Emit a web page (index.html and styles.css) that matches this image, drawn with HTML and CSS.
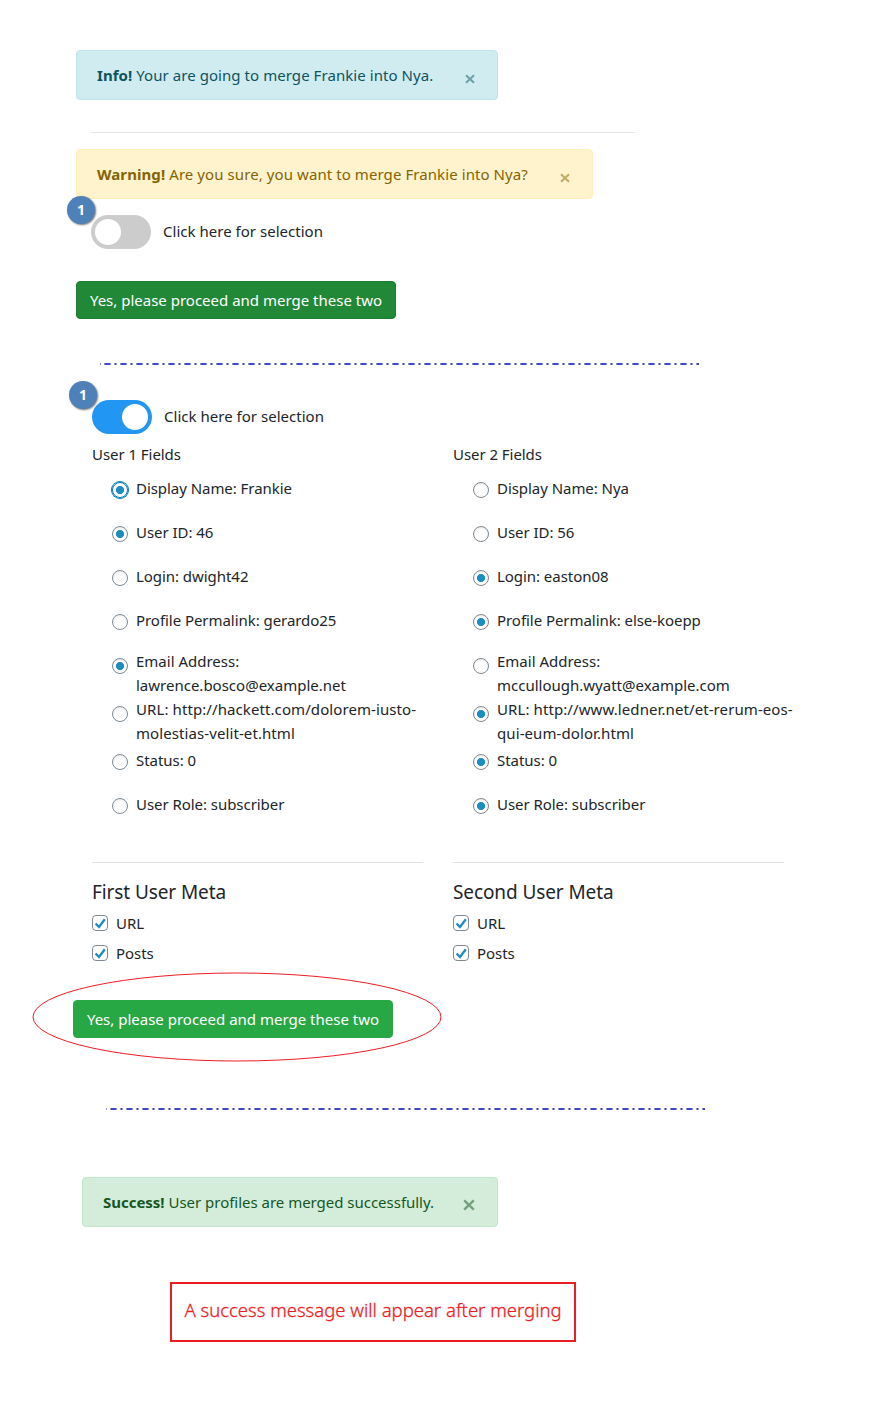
FILE: index.html
```
<!DOCTYPE html>
<html lang="en">
<head>
<meta charset="utf-8">
<title>Merge users</title>
<link rel="stylesheet" href="styles.css">
</head>
<body>
<main class="page">
  <div class="alert alert-info"><span class="msg"><strong>Info!</strong> Your are going to merge Frankie into Nya.</span><svg class="close" viewBox="0 0 10 10"><path d="M1 1.2L9 8.8M9 1.2L1 8.8"/></svg></div>
  <hr class="rule rule-top">
  <div class="alert alert-warning"><span class="msg"><strong>Warning!</strong> Are you sure, you want to merge Frankie into Nya?</span><svg class="close" viewBox="0 0 10 10"><path d="M1 1.2L9 8.8M9 1.2L1 8.8"/></svg></div>
  <div class="switch-row first"><span class="badge">1</span><span class="switch"></span><span class="switch-label">Click here for selection</span></div>
  <button class="btn btn-dark">Yes, please proceed and merge these two</button>
  <svg class="divider divider-one" viewBox="0 0 599 2"><path class="ends" d="M0 1H599"/><path class="mids" d="M0 1H599"/></svg>
  <div class="switch-row second"><span class="badge">1</span><span class="switch on"></span><span class="switch-label">Click here for selection</span></div>
  <div class="columns">
    <section class="column">
      <h2 class="fields-title">User 1 Fields</h2>
      <ul class="fields">
        <li><i class="radio checked focused"></i><span>Display Name: Frankie</span></li>
        <li><i class="radio checked"></i><span>User ID: 46</span></li>
        <li><i class="radio"></i><span>Login: dwight42</span></li>
        <li><i class="radio"></i><span>Profile Permalink: gerardo25</span></li>
        <li class="double"><i class="radio checked"></i><span>Email Address:<br>lawrence.bosco@example.net</span></li>
        <li class="double url"><i class="radio"></i><span>URL: http://hackett.com/dolorem-iusto-<br>molestias-velit-et.html</span></li>
        <li><i class="radio"></i><span>Status: 0</span></li>
        <li><i class="radio"></i><span>User Role: subscriber</span></li>
      </ul>
      <hr class="rule">
      <h3 class="meta-title">First User Meta</h3>
      <div class="check-row"><svg class="check" viewBox="0 0 16 16"><rect x=".5" y=".5" width="15" height="15" rx="3.5"/><path d="M3.6 8.5L7 12 12.8 4.2"/></svg><span>URL</span></div>
      <div class="check-row"><svg class="check" viewBox="0 0 16 16"><rect x=".5" y=".5" width="15" height="15" rx="3.5"/><path d="M3.6 8.5L7 12 12.8 4.2"/></svg><span>Posts</span></div>
    </section>
    <section class="column">
      <h2 class="fields-title">User 2 Fields</h2>
      <ul class="fields">
        <li><i class="radio"></i><span>Display Name: Nya</span></li>
        <li><i class="radio"></i><span>User ID: 56</span></li>
        <li><i class="radio checked"></i><span>Login: easton08</span></li>
        <li><i class="radio checked"></i><span>Profile Permalink: else-koepp</span></li>
        <li class="double"><i class="radio"></i><span>Email Address:<br>mccullough.wyatt@example.com</span></li>
        <li class="double url"><i class="radio checked"></i><span>URL: http://www.ledner.net/et-rerum-eos-<br>qui-eum-dolor.html</span></li>
        <li><i class="radio checked"></i><span>Status: 0</span></li>
        <li><i class="radio checked"></i><span>User Role: subscriber</span></li>
      </ul>
      <hr class="rule">
      <h3 class="meta-title">Second User Meta</h3>
      <div class="check-row"><svg class="check" viewBox="0 0 16 16"><rect x=".5" y=".5" width="15" height="15" rx="3.5"/><path d="M3.6 8.5L7 12 12.8 4.2"/></svg><span>URL</span></div>
      <div class="check-row"><svg class="check" viewBox="0 0 16 16"><rect x=".5" y=".5" width="15" height="15" rx="3.5"/><path d="M3.6 8.5L7 12 12.8 4.2"/></svg><span>Posts</span></div>
    </section>
  </div>
  <div class="circled">
    <button class="btn">Yes, please proceed and merge these two</button>
    <svg class="ellipse" viewBox="0 0 410 90"><ellipse cx="205" cy="45" rx="204" ry="44"/></svg>
  </div>
  <svg class="divider divider-two" viewBox="0 0 599 2"><path class="ends" d="M0 1H599"/><path class="mids" d="M0 1H599"/></svg>
  <div class="alert alert-success"><span class="msg"><strong>Success!</strong> User profiles are merged successfully.</span><svg class="close" viewBox="0 0 10 10"><path d="M1 1.2L9 8.8M9 1.2L1 8.8"/></svg></div>
  <p class="note">A success message will appear after merging</p>
</main>
</body>
</html>
```
FILE: styles.css
```
* { box-sizing: border-box; }
body { margin: 0; background: #fff; color: #212529; font: 15px/24px "Noto Sans", sans-serif; letter-spacing: -0.05px; }
.page { display: flex; flex-direction: column; align-items: flex-start; height: 1412px; padding-top: 50px; overflow: hidden; }
.page > * { flex-shrink: 0; }
h2, h3, p, ul { margin: 0; padding: 0; }
.alert { display: flex; align-items: center; justify-content: space-between; height: 50px; margin-left: 76px; padding: 0 22px 0 20px; border: 1px solid; border-radius: 4px; white-space: nowrap; }
.close { width: 10px; height: 10px; margin-top: 8px; fill: none; stroke: currentColor; stroke-width: 2; opacity: .5; }
.alert-info { width: 422px; color: #0c5460; background: #d1ecf1; border-color: #bee5eb; letter-spacing: .06px; }
.alert-warning { width: 517px; color: #856404; background: #fff3cd; border-color: #ffeeba; letter-spacing: .08px; }
.alert-success { width: 416px; margin: 67px 0 0 82px; color: #155724; background: #d4edda; border-color: #c3e6cb; letter-spacing: -.02px; }
.alert-success .close { width: 12px; height: 12px; margin-top: 6px; }
.rule { width: 100%; height: 1px; margin: 0; border: 0; background: #e2e2e2; }
.rule-top { width: 544px; margin: 32px 0 16px 91px; }
.switch-row { position: relative; display: flex; align-items: center; height: 34px; }
.first { margin: 16px 0 0 91px; }
.second { margin: 35px 0 0 92px; }
.switch { width: 60px; height: 34px; padding: 4px; border-radius: 17px; background: #ccc; }
.switch::before { content: ""; display: block; width: 26px; height: 26px; border-radius: 50%; background: #fff; }
.on { background: #2196f3; }
.on::before { margin-left: 26px; }
.switch-label { margin: 0 0 2px 12px; letter-spacing: .02px; }
.badge { position: absolute; left: -24px; top: -19px; width: 28px; height: 28px; border-radius: 50%; background: #4f81b9; color: #fff; font: bold 14px/28px "Open Sans", sans-serif; text-align: center; box-shadow: 1px 1px 2px rgba(0,0,0,.55); }
.second .badge { left: -23px; }
.btn { width: 320px; height: 38px; margin: 0; padding: 0; border: 1px solid #28a745; border-radius: 4px; background: #28a745; color: #fff; font: inherit; letter-spacing: 0; white-space: nowrap; }
.btn-dark { margin: 32px 0 0 76px; background: #218838; border-color: #1e7e34; }
.divider { width: 599px; height: 2px; fill: none; }
.divider-one { margin: 44px 0 0 100px; }
.divider-two { margin: 70px 0 0 106px; }
.divider .ends { stroke: #9294c4; stroke-width: 2; stroke-dasharray: 7 3 3 3; stroke-dashoffset: 12; }
.divider .mids { stroke: #3f48cc; stroke-width: 2; stroke-dasharray: 5 5 1 5; stroke-dashoffset: 11; }
.columns { display: grid; grid-template-columns: 331px 331px; column-gap: 30px; margin: 8px 0 0 92px; }
.fields-title { height: 31px; font-size: inherit; font-weight: 400; line-height: 24px; }
.fields { height: 389px; list-style: none; }
.fields li { display: flex; height: 44px; padding: 3px 0 0 20px; white-space: nowrap; }
.fields .double { height: 48px; padding-top: 0; }
.radio { flex: none; width: 16px; height: 16px; margin: 6px 8px 0 0; border: 1px solid #7e8993; border-radius: 50%; background: #fff; box-shadow: inset 0 1px 2px rgba(0,0,0,.1); }
.double .radio { margin-top: 9px; }
.double { letter-spacing: 0; }
.url { letter-spacing: .09px; }
.checked { background: radial-gradient(circle, #1e8cbe 3.7px, #fff 4.4px); }
.focused { border-color: #007cba; box-shadow: 0 0 0 1px #007cba; }
.meta-title { height: 36px; margin-top: 9px; font-size: 19px; font-weight: 400; line-height: 40px; letter-spacing: -.1px; }
.check-row { display: flex; align-items: center; gap: 8px; height: 30px; }
.check { width: 16px; height: 16px; fill: #fff; stroke: #7e8993; }
.check path { fill: none; stroke: #1e8cbe; stroke-width: 2.3; }
.circled { position: relative; margin: 32px 0 0 73px; height: 38px; }
.ellipse { position: absolute; left: -41px; top: -28px; width: 410px; height: 90px; fill: none; stroke: #ed1c24; stroke-width: 1; }
.note { width: 406px; height: 60px; margin: 55px 0 0 170px; border: 2px solid #ed1c24; color: #ed1c24; font: 300 18.5px/52px "Noto Sans", sans-serif; -webkit-text-stroke: .3px #ed1c24; letter-spacing: 0; text-align: center; white-space: nowrap; }
```
